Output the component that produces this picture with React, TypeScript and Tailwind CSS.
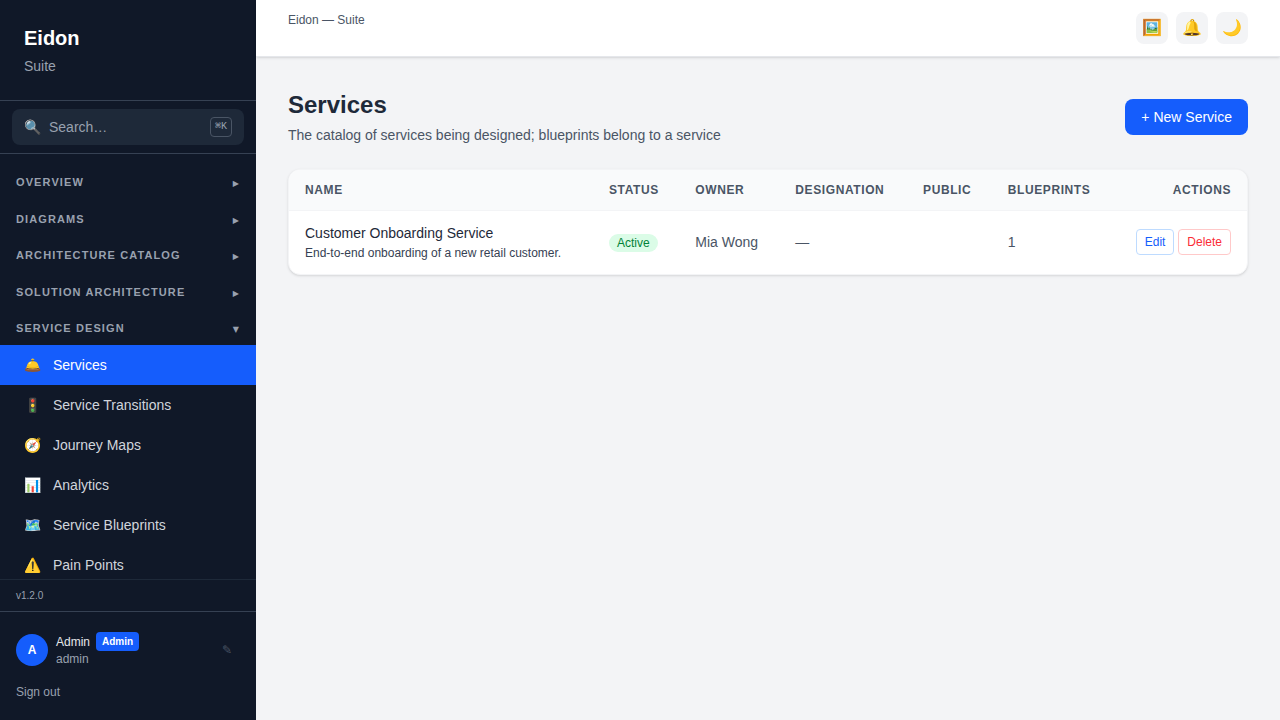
import { useState } from "react";

const sections = [
  { title: "Overview", items: [] },
  { title: "Diagrams", items: [] },
  { title: "Architecture Catalog", items: [] },
  { title: "Solution Architecture", items: [] },
  {
    title: "Service Design",
    items: [
      { icon: "🛎️", label: "Services" },
      { icon: "🚦", label: "Service Transitions" },
      { icon: "🧭", label: "Journey Maps" },
      { icon: "📊", label: "Analytics" },
      { icon: "🗺️", label: "Service Blueprints" },
      { icon: "⚠️", label: "Pain Points" },
    ],
  },
];

const services = [
  {
    name: "Customer Onboarding Service",
    description: "End-to-end onboarding of a new retail customer.",
    status: "Active",
    owner: "Mia Wong",
    designation: "—",
    isPublic: "",
    blueprints: 1,
  },
];

function Sidebar() {
  const [open, setOpen] = useState("Service Design");

  return (
    <aside className="w-64 shrink-0 flex flex-col bg-gray-900 text-white">
      <div className="p-6 border-b border-gray-700">
        <div className="text-xl font-bold">Eidon</div>
        <p className="mt-1 text-sm text-gray-400">Suite</p>
      </div>

      <div className="px-3 py-2 border-b border-gray-700">
        <label className="flex items-center gap-2 px-3 py-2 rounded-lg bg-gray-800 text-sm text-gray-400">
          <span aria-hidden="true">🔍</span>
          <input
            type="text"
            aria-label="Search"
            placeholder="Search…"
            className="flex-1 min-w-0 h-5 bg-transparent outline-none placeholder:text-gray-400"
          />
          <kbd className="px-1 rounded border border-gray-600 text-[10px] leading-[18px] font-['Liberation_Mono',monospace]">⌘K</kbd>
        </label>
      </div>

      <nav className="flex-1 min-h-0 overflow-y-auto py-3 [scrollbar-width:none]">
        {sections.map((section) => (
          <div key={section.title} className="mb-1">
            <button
              onClick={() => setOpen(open === section.title ? "" : section.title)}
              className="w-full flex items-center justify-between px-4 py-2 text-[11px] font-semibold uppercase tracking-widest text-gray-400"
            >
              <span>{section.title}</span>
              <span className="pt-1 text-[8px] font-['DejaVu_Sans',sans-serif]">
                {open === section.title ? "▼" : "▶"}
              </span>
            </button>
            {open === section.title &&
              section.items.map((item) => (
                <a
                  key={item.label}
                  href="#"
                  className={`flex items-center gap-3 px-6 py-2.5 text-sm ${
                    item.label === "Services" ? "bg-blue-600 text-white" : "text-gray-300 hover:bg-gray-800"
                  }`}
                >
                  <span aria-hidden="true">{item.icon}</span>
                  <span>{item.label}</span>
                </a>
              ))}
          </div>
        ))}
      </nav>

      <div className="px-4 py-2 border-t border-gray-800 text-[10px] text-gray-400">v1.2.0</div>

      <div className="p-4 border-t border-gray-700">
        <button className="w-full flex items-center gap-2 py-1 pr-2 text-left">
          <span className="size-8 shrink-0 flex items-center justify-center rounded-full bg-blue-600 text-xs font-bold">
            A
          </span>
          <span className="flex-1 min-w-0 text-xs">
            <span className="flex items-center gap-1.5">
              <span className="text-gray-200">Admin</span>
              <span className="px-1.5 py-0.5 rounded bg-blue-600 text-[10px] leading-[15px] font-semibold">Admin</span>
            </span>
            <span className="block text-gray-400">admin</span>
          </span>
          <span className="text-xs text-gray-600">✎</span>
        </button>
        <button className="mt-[9px] py-1 block text-xs text-gray-400 hover:text-white">Sign out</button>
      </div>
    </aside>
  );
}

function TopBar() {
  return (
    <header className="flex items-start justify-between px-8 py-3 bg-white border-b border-gray-200 shadow-sm">
      <div className="text-xs text-gray-600">Eidon — Suite</div>
      <div className="flex gap-2">
        <button aria-label="Gallery" className="size-8 rounded-lg bg-gray-100">🖼️</button>
        <button aria-label="Notifications" className="size-8 rounded-lg bg-gray-100">🔔</button>
        <button aria-label="Dark mode" className="size-8 rounded-lg bg-gray-100">🌙</button>
      </div>
    </header>
  );
}

export default function App() {
  return (
    <div className="flex h-screen bg-gray-100 font-['Liberation_Sans',Arial,sans-serif]">
      <Sidebar />
      <div className="flex-1 min-w-0 flex flex-col">
        <TopBar />
        <main className="flex-1 overflow-y-auto p-8">
          <div className="flex items-center justify-between mb-6">
            <div>
              <h1 className="text-2xl font-bold text-gray-800">Services</h1>
              <p className="mt-1 text-sm text-gray-600">
                The catalog of services being designed; blueprints belong to a service
              </p>
            </div>
            <button className="px-4 py-2 rounded-lg bg-blue-600 text-sm text-white hover:bg-blue-700">
              + New Service
            </button>
          </div>

          <div className="overflow-hidden rounded-xl border border-gray-100 bg-white shadow-sm">
            <table className="w-full text-sm text-gray-600">
              <thead className="bg-gray-50 border-b border-gray-100">
                <tr className="text-left text-xs uppercase tracking-wider">
                  <th className="px-4 py-3 font-semibold">Name</th>
                  <th className="px-4 py-3 font-semibold">Status</th>
                  <th className="px-4 py-3 font-semibold">Owner</th>
                  <th className="px-4 py-3 font-semibold">Designation</th>
                  <th className="px-4 py-3 font-semibold">Public</th>
                  <th className="px-4 py-3 font-semibold">Blueprints</th>
                  <th className="px-4 py-3 font-semibold text-right">Actions</th>
                </tr>
              </thead>
              <tbody>
                {services.map((service) => (
                  <tr key={service.name}>
                    <td className="px-4 pt-3 pb-[13px]">
                      <div className="text-gray-800">{service.name}</div>
                      <div className="mt-0.5 text-xs text-gray-700">{service.description}</div>
                    </td>
                    <td className="px-4 pt-3 pb-[13px]">
                      <span className="px-2 py-0.5 rounded-full bg-green-100 text-xs text-green-700">
                        {service.status}
                      </span>
                    </td>
                    <td className="px-4 pt-3 pb-[13px]">{service.owner}</td>
                    <td className="px-4 pt-3 pb-[13px]">{service.designation}</td>
                    <td className="px-4 pt-3 pb-[13px]">{service.isPublic}</td>
                    <td className="px-4 pt-3 pb-[13px]">{service.blueprints}</td>
                    <td className="px-4 pt-3 pb-[13px] text-right whitespace-nowrap">
                      <button className="px-2 py-1 rounded border border-blue-200 text-xs text-blue-600">Edit</button>{" "}
                      <button className="px-2 py-1 rounded border border-red-200 text-xs text-red-500">Delete</button>
                    </td>
                  </tr>
                ))}
              </tbody>
            </table>
          </div>
        </main>
      </div>
    </div>
  );
}
